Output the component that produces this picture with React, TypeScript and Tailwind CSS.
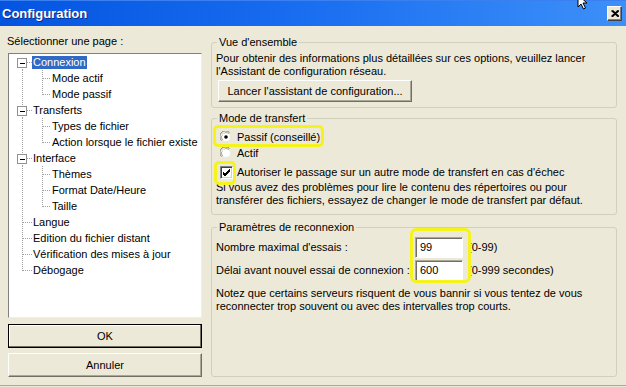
import React from "react";

type Row = {
  label: string;
  level: 0 | 1;
  toggle?: boolean;
  first?: boolean;
  last?: boolean;
  lastChild?: boolean;
  selected?: boolean;
};

const rows: Row[] = [
  { label: "Connexion", level: 0, toggle: true, first: true, selected: true },
  { label: "Mode actif", level: 1 },
  { label: "Mode passif", level: 1, lastChild: true },
  { label: "Transferts", level: 0, toggle: true },
  { label: "Types de fichier", level: 1 },
  { label: "Action lorsque le fichier existe", level: 1, lastChild: true },
  { label: "Interface", level: 0, toggle: true },
  { label: "Thèmes", level: 1 },
  { label: "Format Date/Heure", level: 1 },
  { label: "Taille", level: 1, lastChild: true },
  { label: "Langue", level: 0 },
  { label: "Edition du fichier distant", level: 0 },
  { label: "Vérification des mises à jour", level: 0 },
  { label: "Débogage", level: 0, last: true },
];

const dot = { stroke: "#a0a0a0", strokeWidth: 1, strokeDasharray: "1 1", shapeRendering: "crispEdges" as const };

function TreeLines({ row }: { row: Row }) {
  const w = row.level === 0 ? 23 : 42;
  return (
    <svg width={w} height={16} className="shrink-0">
      {row.level === 0 && row.toggle && (
        <>
          {!row.first && <line x1={13.5} y1={0} x2={13.5} y2={4} {...dot} />}
          <line x1={13.5} y1={13} x2={13.5} y2={16} {...dot} />
          <line x1={18} y1={8.5} x2={23} y2={8.5} {...dot} />
          <rect x={8.5} y={4.5} width={9} height={9} fill="white" stroke="#919191" shapeRendering="crispEdges" />
          <line x1={11} y1={9} x2={16} y2={9} stroke="#000" strokeWidth={1} shapeRendering="crispEdges" />
        </>
      )}
      {row.level === 0 && !row.toggle && (
        <>
          <line x1={13.5} y1={0} x2={13.5} y2={row.last ? 9 : 16} {...dot} />
          <line x1={14} y1={8.5} x2={23} y2={8.5} {...dot} />
        </>
      )}
      {row.level === 1 && (
        <>
          <line x1={13.5} y1={0} x2={13.5} y2={16} {...dot} />
          <line x1={33.5} y1={0} x2={33.5} y2={row.lastChild ? 9 : 16} {...dot} />
          <line x1={34} y1={8.5} x2={42} y2={8.5} {...dot} />
        </>
      )}
    </svg>
  );
}

function Radio({ checked }: { checked?: boolean }) {
  return (
    <svg width={12} height={12} className="shrink-0">
      <circle cx={6} cy={6} r={5.5} fill="#ece9d8" />
      <path d="M 1.5 9.5 A 5.5 5.5 0 0 1 9.5 1.5" fill="none" stroke="#808080" strokeWidth={1} />
      <path d="M 2.5 8.5 A 4.5 4.5 0 0 1 8.5 2.5" fill="none" stroke="#404040" strokeWidth={1} />
      <circle cx={6} cy={6} r={4} fill="white" />
      {checked && <circle cx={6} cy={6} r={1.8} fill="#000" />}
    </svg>
  );
}

function Checkbox() {
  return (
    <div className="w-[13px] h-[13px] shrink-0 bg-white border border-t-[#808080] border-l-[#808080] border-b-white border-r-white shadow-[inset_1px_1px_0_#404040,inset_-1px_-1px_0_#d4d0c8] flex items-center justify-center">
      <svg width={9} height={9}>
        <path d="M1 4 L3 6 L8 1 M1 5 L3 7 L8 2 M1 6 L3 8 L8 3" fill="none" stroke="#000" strokeWidth={1} shapeRendering="crispEdges" />
      </svg>
    </div>
  );
}

function Field({ value }: { value: string }) {
  return (
    <div className="w-[48px] h-[21px] shrink-0 bg-white border border-t-[#aca899] border-l-[#aca899] border-b-white border-r-white shadow-[inset_1px_1px_0_#716f64] flex items-center pl-[4px]">
      {value}
    </div>
  );
}

export default function App() {
  return (
    <div className="relative w-[626px] h-[387px] overflow-hidden bg-[#ece9d8] flex flex-col font-['Liberation_Sans',Arial,sans-serif] text-[11px] leading-[13px] text-black">
      {/* Title bar */}
      <div className="h-[26px] shrink-0 flex items-center bg-linear-to-r from-[#0454e0] via-[#1a6ef0] to-[#3d90f8] border-t border-t-[#3b80f0]">
        <span className="pl-[2px] font-bold text-[13px] text-white [text-shadow:1px_1px_0_#0a2b8a]">Configuration</span>
        <div className="ml-auto mr-[4px] w-[15px] h-[15px] bg-[#ece9d8] border border-t-white border-l-white border-b-[#404040] border-r-[#404040] shadow-[inset_-1px_-1px_0_#808080] flex items-center justify-center">
          <svg width={8} height={7}>
            <path d="M0.5 0.5 L7 6.5 M7 0.5 L0.5 6.5 M1.5 0.5 L8 6.5 M8 0.5 L1.5 6.5" stroke="#000" strokeWidth={1.4} />
          </svg>
        </div>
      </div>

      {/* Body */}
      <div className="flex flex-1 min-h-0">
        {/* Left column */}
        <div className="ml-[8px] w-[194px] flex flex-col pt-[9px]">
          <div className="-ml-[1px] h-[13px]">Sélectionner une page :</div>
          <div className="mt-[5px] h-[265px] bg-white border border-t-[#808080] border-l-[#808080] border-b-[#f1efe2] border-r-[#f1efe2] flex flex-col">
            {rows.map((r) => (
              <div key={r.label} className="h-[16px] flex items-center whitespace-nowrap">
                <TreeLines row={r} />
                <span
                  className={
                    r.selected
                      ? "h-[13px] px-[1px] bg-[#316ac5] text-white leading-[13px]"
                      : "h-[13px] px-[1px] leading-[13px]"
                  }
                >
                  {r.label}
                </span>
              </div>
            ))}
          </div>
          <button className="mt-[6px] h-[24px] border border-black bg-[#ece9d8] shadow-[inset_-1px_-1px_0_#716f64,inset_1px_1px_0_#ffffff] flex items-center justify-center">
            OK
          </button>
          <button className="mt-[5px] h-[24px] border border-t-white border-l-white border-b-[#716f64] border-r-[#716f64] bg-[#ece9d8] shadow-[inset_-1px_-1px_0_#aca899] flex items-center justify-center">
            Annuler
          </button>
        </div>

        {/* Right column */}
        <div className="ml-[9px] w-[406px] flex flex-col pt-[10px] pb-[8px]">
          <fieldset className="m-0 border border-[#d0d0bf] rounded-[3px] pl-[4px] pr-[4px] pb-[5px]">
            <legend className="ml-[1px] px-[2px] leading-[13px]">Vue d'ensemble</legend>
            <div className="mt-[3px]">
              Pour obtenir des informations plus détaillées sur ces options, veuillez lancer
              <br />
              l'Assistant de configuration réseau.
            </div>
            <button className="mt-[2px] ml-[2px] w-[194px] h-[22px] border border-t-white border-l-white border-b-[#716f64] border-r-[#716f64] bg-[#ece9d8] shadow-[inset_-1px_-1px_0_#aca899] flex items-center justify-center">
              Lancer l'assistant de configuration...
            </button>
          </fieldset>

          <fieldset className="mt-[4px] m-0 border border-[#d0d0bf] rounded-[3px] pl-[4px] pr-[4px] pb-[7px]">
            <legend className="ml-[1px] px-[2px] leading-[13px]">Mode de transfert</legend>
            <div className="mt-[4px] h-[16px] flex items-center gap-[5px] pl-[4px]">
              <Radio checked />
              <span>Passif (conseillé)</span>
            </div>
            <div className="h-[16px] flex items-center gap-[5px] pl-[4px]">
              <Radio />
              <span>Actif</span>
            </div>
            <div className="mt-[3px] h-[16px] flex items-center gap-[4px] pl-[4px]">
              <Checkbox />
              <span>Autoriser le passage sur un autre mode de transfert en cas d'échec</span>
            </div>
            <div className="mt-[1px]">
              Si vous avez des problèmes pour lire le contenu des répertoires ou pour
              <br />
              transférer des fichiers, essayez de changer le mode de transfert par défaut.
            </div>
          </fieldset>

          <fieldset className="mt-[6px] m-0 flex-1 border border-[#d0d0bf] rounded-[3px] pl-[4px] pr-[4px]">
            <legend className="ml-[1px] px-[2px] leading-[13px]">Paramètres de reconnexion</legend>
            <div className="mt-[2px] h-[22px] flex items-center">
              <span className="w-[199px] shrink-0">Nombre maximal d'essais :</span>
              <Field value="99" />
              <span className="ml-[5px]">(0-99)</span>
            </div>
            <div className="mt-[1px] h-[22px] flex items-center">
              <span className="w-[199px] shrink-0">Délai avant nouvel essai de connexion :</span>
              <Field value="600" />
              <span className="ml-[5px]">(0-999 secondes)</span>
            </div>
            <div className="mt-[6px]">
              Notez que certains serveurs risquent de vous bannir si vous tentez de vous
              <br />
              reconnecter trop souvent ou avec des intervalles trop courts.
            </div>
          </fieldset>
        </div>
      </div>
      <div className="h-[1px] shrink-0 bg-[#aca899]" />
      <div className="h-[1px] shrink-0 bg-[#ece9d8]" />

      {/* Yellow annotation highlights */}
      <div className="absolute left-[213px] top-[125px] w-[111px] h-[22px] border-[3px] border-[#f4f41c] rounded-[5px]" />
      <div className="absolute left-[214px] top-[161px] w-[22px] h-[24px] border-[3px] border-[#f4f41c] rounded-[5px]" />
      <div className="absolute left-[410px] top-[228px] w-[61px] h-[55px] border-[3px] border-[#f4f41c] rounded-[6px]" />

      {/* Mouse cursor */}
      <svg className="absolute left-[577px] top-[-6px]" width={14} height={18}>
        <path d="M1 1 L1 13 L4 10 L6.5 15 L8.5 14 L6 9 L10 9 Z" fill="white" stroke="black" strokeWidth={1} />
      </svg>
    </div>
  );
}
